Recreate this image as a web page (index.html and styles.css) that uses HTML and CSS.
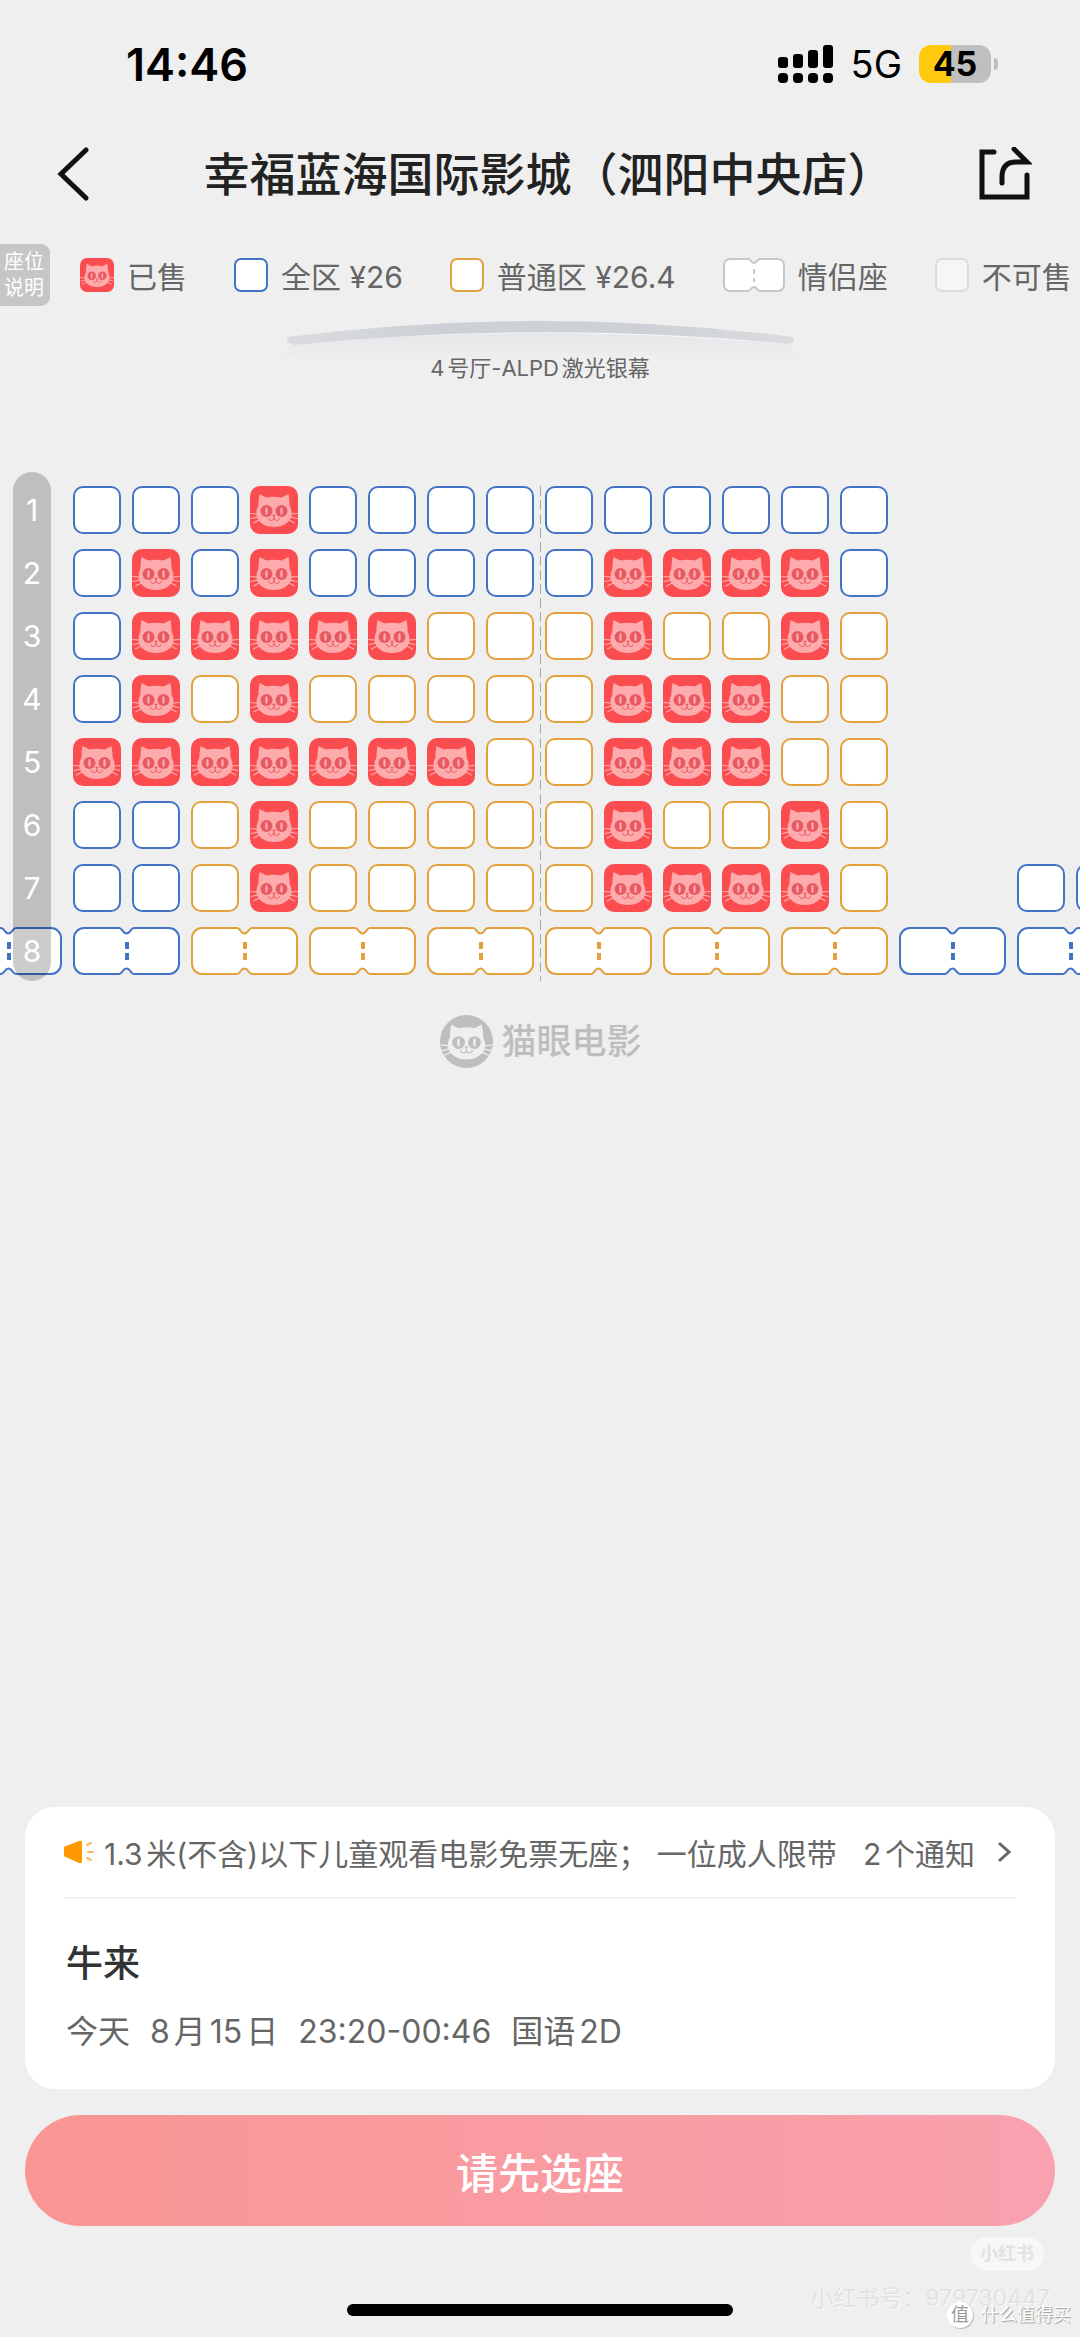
FILE: index.html
```html
<!DOCTYPE html>
<html lang="zh-CN">
<head>
  <meta charset="UTF-8">
  <meta name="viewport" content="width=device-width, initial-scale=1">
  <title>选座</title>
  <link rel="stylesheet" href="styles.css">
</head>
<body>
  <svg class="symbols" aria-hidden="true">
    <symbol id="cat" viewBox="0 0 48 48">
      <path fill="currentColor" d="M9.500 8L16.500 11.500Q24 9.800 31.500 11.500L38.500 8Q39.600 14 39.600 19.500Q42 24 41.500 29C40.500 36.500 33 41 24 41S7.500 36.500 6.500 29Q6 24 8.400 19.500Q8.400 14 9.500 8Z"/>
      <path fill="none" stroke="currentColor" stroke-width="1.200" stroke-linecap="round" d="M.8 27.500L8 28.200M1.200 32.500L8.500 30.800M3.500 37L10 33.500M47.200 27.500L40 28.200M46.800 32.500L39.500 30.800M44.500 37L38 33.500"/>
      <circle class="cat-eye" cx="16.500" cy="25" r="6"/>
      <circle class="cat-eye" cx="31.500" cy="25" r="6"/>
      <ellipse fill="currentColor" cx="16.500" cy="25" rx="1.200" ry="4"/>
      <ellipse fill="currentColor" cx="31.500" cy="25" rx="1.200" ry="4"/>
      <path class="cat-eye" d="M22 28.800h4l-2 2.500z"/>
      <path class="cat-mouth" d="M18.500 32c.3 3.500 5.500 3.500 5.500-.8c0 4.300 5.200 4.300 5.500.8"/>
    </symbol>
    <symbol id="couple" viewBox="0 0 107 48">
      <path fill="#fff" stroke="currentColor" stroke-width="2" d="M11 1H46C49.500 1 49.500 6.500 53.500 6.500S57.500 1 61 1H96A10 10 0 0 1 106 11V37A10 10 0 0 1 96 47H61C57.500 47 57.500 41.500 53.500 41.500S49.500 47 46 47H11A10 10 0 0 1 1 37V11A10 10 0 0 1 11 1Z"/>
      <path fill="currentColor" d="M52 15h4v7h-4zM52 26h4v7h-4z"/>
    </symbol>
  </svg>

  <div class="page">
    <div class="status-bar">
      <span class="time">14:46</span>
      <div class="status-right">
        <svg class="signal" viewBox="0 0 56 38">
          <rect x="0" y="12" width="10" height="11" rx="3"/>
          <rect x="15" y="9" width="10" height="14" rx="3"/>
          <rect x="30" y="5" width="10" height="18" rx="3"/>
          <rect x="45" y="0" width="10" height="23" rx="3"/>
          <rect x="0" y="28" width="10" height="10" rx="4"/>
          <rect x="15" y="28" width="10" height="10" rx="4"/>
          <rect x="30" y="28" width="10" height="10" rx="4"/>
          <rect x="45" y="28" width="10" height="10" rx="4"/>
        </svg>
        <span class="network">5G</span>
        <div class="battery">
          <span class="battery-body">45</span>
          <span class="battery-tip"></span>
        </div>
      </div>
    </div>

    <header class="header">
      <button class="icon-button" type="button" aria-label="返回">
        <svg class="icon-back" viewBox="0 0 32 54">
          <path d="M29 3L4 27L29 51"/>
        </svg>
      </button>
      <h1>幸福蓝海国际影城（泗阳中央店）</h1>
      <button class="icon-button" type="button" aria-label="分享">
        <svg class="icon-share" viewBox="0 0 54 54">
          <path d="M16 5H4V50H49V28"/>
          <path d="M24 36V30C24 20 29 15 38 15H49L36 2"/>
        </svg>
      </button>
    </header>

    <div class="legend">
      <span class="legend-badge">座位<br>说明</span>
      <div class="legend-item"><span class="mark sold"><svg><use href="#cat"/></svg></span>已售</div>
      <div class="legend-item"><span class="mark blue"></span>全区 ¥26</div>
      <div class="legend-item"><span class="mark orange"></span>普通区 ¥26.4</div>
      <div class="legend-item">
        <svg class="mark-couple" viewBox="0 0 62 34">
          <path fill="#fff" stroke="#c6c6c6" stroke-width="2" d="M7 1H25C28 1 28 5 31 5S34 1 37 1H55A6 6 0 0 1 61 7V27A6 6 0 0 1 55 33H37C34 33 34 29 31 29S28 33 25 33H7A6 6 0 0 1 1 27V7A6 6 0 0 1 7 1Z"/>
          <path stroke="#c6c6c6" stroke-width="2" stroke-dasharray="5 4" d="M31 11V24"/>
        </svg>情侣座
      </div>
      <div class="legend-item"><span class="mark disabled"></span>不可售</div>
    </div>

    <div class="screen">
      <svg class="screen-arc" viewBox="0 0 540 44">
        <defs>
          <linearGradient id="glow" x1="0" y1="0" x2="0" y2="1">
            <stop offset="0" stop-color="#e6e7ea"/>
            <stop offset="1" stop-color="#efefef"/>
          </linearGradient>
          <linearGradient id="arc">
            <stop offset="0" stop-color="#dadcdf"/>
            <stop offset=".3" stop-color="#cdd0d5"/>
            <stop offset=".7" stop-color="#cdd0d5"/>
            <stop offset="1" stop-color="#dadcdf"/>
          </linearGradient>
        </defs>
        <path fill="url(#glow)" d="M20 27Q270 3 520 27L530 40Q270 48 10 40Z"/>
        <path fill="none" stroke="#f8f9fb" stroke-width="2" d="M60 22Q270 6 480 22"/>
        <path fill="url(#arc)" d="M17 19Q270 -13 523 19Q527 22 520 26Q270 2 24 27Q16 25 17 19Z"/>
      </svg>
      <p>4号厅-ALPD激光银幕</p>
    </div>

    <main class="hall">
      <div class="seats" id="seats"></div>
      <div class="center-line"></div>
      <div class="row-numbers" id="row-numbers"></div>
    </main>

    <div class="brand">
      <span class="brand-logo"><svg><use href="#cat"/></svg></span>
      <span>猫眼电影</span>
    </div>

    <footer class="bottom">
      <section class="card">
        <div class="notice">
          <svg class="icon-horn" viewBox="0 0 30 24">
            <path fill="#ff9800" d="M2 6Q0 6 0 8V15Q0 17 2 17L15 23Q18 24 18 21V2Q18 0 15 1Z"/>
            <path fill="none" stroke="#ffb74d" stroke-width="2" stroke-linecap="round" d="M23 5L27 3M24 12H29M23 18L27 20"/>
          </svg>
          <span class="notice-text">1.3米(不含)以下儿童观看电影免票无座； 一位成人限带</span>
          <a class="notice-more" href="#">2个通知
            <svg class="icon-arrow" viewBox="0 0 14 22"><path d="M2 2L12 11L2 20"/></svg>
          </a>
        </div>
        <h2>牛来</h2>
        <p class="session">
          <span>今天</span>
          <span>8月15日</span>
          <span>23:20-00:46</span>
          <span>国语2D</span>
        </p>
      </section>
      <button class="submit" type="button">请先选座</button>
      <div class="home-indicator"></div>
    </footer>

    <div class="watermark">
      <span class="watermark-pill">小红书</span>
      <span class="watermark-id">小红书号：979730447</span>
    </div>
    <div class="smzdm"><span class="smzdm-logo">值</span>什么值得买</div>
  </div>

  <script src="seats.js"></script>
</body>
</html>
```
FILE: styles.css
```css
* {
  box-sizing: border-box;
}

body {
  margin: 0;
  background-color: #efefef;
  color: #666;
  font-family: Inter, "Noto Sans CJK SC", sans-serif;
  text-autospace: normal;
}

h1, h2, p {
  margin: 0;
}

button {
  padding: 0;
  border: none;
  background: none;
  font-family: inherit;
  cursor: pointer;
}

svg {
  display: block;
}

.symbols {
  position: absolute;
  width: 0;
  height: 0;
}

.page {
  position: relative;
  display: flex;
  flex-direction: column;
  min-height: 100vh;
  overflow: hidden;
}

/* status bar */
.status-bar {
  display: flex;
  justify-content: space-between;
  align-items: center;
  height: 128px;
  padding: 0 82px 0 126px;
  color: #000;
}

.time {
  font-size: 45px;
  font-weight: 600;
}

.status-right {
  display: flex;
  align-items: center;
}

.signal {
  width: 56px;
  height: 38px;
}

.network {
  margin: 0 17px;
  font-size: 38px;
}

.battery {
  display: flex;
  align-items: center;
  gap: 3px;
}

.battery-body {
  width: 72px;
  border-radius: 12px;
  background: linear-gradient(to right, #ffc90d 45%, #bfbfbf 45%);
  font-size: 34px;
  font-weight: 700;
  line-height: 38px;
  text-align: center;
}

.battery-tip {
  width: 4px;
  height: 12px;
  border-radius: 0 6px 6px 0;
  background-color: #bfbfbf;
}

/* header */
.header {
  display: flex;
  justify-content: space-between;
  align-items: center;
  height: 92px;
  padding: 0 48px 0 57px;
}

.header h1 {
  padding-left: 30px;
  color: #222;
  font-size: 46px;
  font-weight: 500;
  line-height: 60px;
}

.icon-back {
  width: 32px;
  height: 54px;
}

.icon-share {
  width: 54px;
  height: 54px;
}

.icon-back path,
.icon-share path {
  fill: none;
  stroke: #111;
  stroke-width: 5;
  stroke-linecap: round;
}

/* legend */
.legend {
  display: flex;
  align-items: center;
  gap: 47px;
  height: 110px;
  white-space: nowrap;
}

.legend-badge {
  width: 50px;
  margin-right: -17px;
  padding: 5px 4px;
  border-radius: 0 9px 9px 0;
  background-color: #c6c6c6;
  color: #fff;
  font-size: 20px;
  line-height: 26px;
}

.legend-item {
  display: flex;
  align-items: center;
  gap: 13px;
  font-size: 30px;
}

.mark {
  width: 34px;
  height: 34px;
  border: 2px solid;
  border-radius: 7px;
  background-color: #fff;
}

.mark-couple {
  width: 62px;
  height: 34px;
}

.blue {
  color: #4273c5;
}

.orange {
  color: #e2a13b;
}

.mark.disabled {
  border-color: #dcdcdc;
  background-color: #f6f6f6;
}

.sold {
  border: none;
  background-color: #fb4d50;
  color: #feabae;
}

.sold svg {
  width: 100%;
  height: 100%;
}

.cat-eye {
  fill: var(--eye, #e75a61);
}

.cat-mouth {
  fill: none;
  stroke: var(--eye, #e75a61);
  stroke-width: 1;
}

/* screen */
.screen {
  display: flex;
  flex-direction: column;
  align-items: center;
  margin-top: -12px;
}

.screen-arc {
  width: 540px;
  height: 44px;
}

.screen p {
  margin-top: -9px;
  font-size: 22px;
  line-height: 30px;
}

/* seats */
.hall {
  position: relative;
  margin-top: 89px;
  padding: 14px 0 6px;
  overflow: hidden;
}

.seats {
  display: flex;
  flex-direction: column;
  gap: 15px;
  margin-left: -45px;
}

.seat-row {
  display: grid;
  grid-template-columns: repeat(20, 48px);
  gap: 11px;
}

.seat {
  height: 48px;
  border: 2px solid;
  border-radius: 10px;
  background-color: #fff;
}

.seat.sold {
  border: none;
  background-color: #fb4d50;
  color: #feabae;
}

.seat.couple {
  grid-column: span 2;
  border: none;
  background: none;
}

.seat.couple svg {
  width: 100%;
  height: 48px;
}

.center-line {
  position: absolute;
  top: 14px;
  bottom: 0;
  left: 50%;
  width: 1px;
  background: repeating-linear-gradient(to bottom, #aaa 0, #aaa 10px, transparent 10px, transparent 14px);
}

.row-numbers {
  position: absolute;
  top: 0;
  bottom: 0;
  left: 13px;
  display: flex;
  flex-direction: column;
  gap: 15px;
  width: 38px;
  padding-top: 14px;
  border-radius: 19px;
  background-color: rgba(0, 0, 0, 0.2);
  color: #fff;
  font-size: 30px;
  line-height: 48px;
  text-align: center;
}

.brand {
  display: flex;
  justify-content: center;
  align-items: center;
  gap: 8px;
  margin-top: 34px;
  padding-left: 2px;
  color: #bebebe;
  font-size: 35px;
  font-weight: 500;
  line-height: 53px;
}

.brand-logo {
  --eye: #bebebe;
  width: 53px;
  height: 53px;
  padding: 1px;
  border-radius: 50%;
  background-color: #bebebe;
  color: #efefef;
}

.brand-logo svg {
  width: 51px;
  height: 51px;
}

/* bottom */
.bottom {
  margin-top: auto;
  padding: 0 25px 21px;
}

.card {
  padding: 0 39px 36px;
  border-radius: 30px;
  background-color: #fff;
}

.notice {
  display: flex;
  align-items: center;
  height: 92px;
  border-bottom: 2px solid #f0f0f0;
  font-size: 30px;
  white-space: nowrap;
}

.icon-horn {
  flex: none;
  width: 30px;
  height: 24px;
}

.notice-text {
  flex: 1;
  margin: 0 12px 0 10px;
  overflow: hidden;
}

.notice-more {
  display: flex;
  align-items: center;
  gap: 22px;
  padding-right: 5px;
  color: inherit;
  text-decoration: none;
}

.icon-arrow {
  width: 14px;
  height: 22px;
}

.icon-arrow path {
  fill: none;
  stroke: #666;
  stroke-width: 3;
}

.card h2 {
  margin-top: 40px;
  padding-left: 2px;
  color: #333;
  font-size: 37px;
  font-weight: 500;
  line-height: 50px;
}

.session {
  display: flex;
  gap: 20px;
  margin-top: 22px;
  padding-left: 2px;
  font-size: 32px;
  line-height: 42px;
}

.submit {
  display: block;
  width: 100%;
  height: 111px;
  margin-top: 26px;
  border-radius: 56px;
  background: linear-gradient(to right, #f99694, #f9a1af);
  color: #fff;
  font-size: 42px;
  font-weight: 500;
}

.home-indicator {
  width: 386px;
  height: 12px;
  margin: 78px auto 0;
  border-radius: 6px;
  background-color: #000;
}

/* watermarks */
.watermark {
  position: absolute;
  right: 30px;
  bottom: 22px;
  display: flex;
  flex-direction: column;
  align-items: flex-end;
  gap: 10px;
  color: #e2e2e2;
}

.watermark-pill {
  margin-right: 6px;
  padding: 0 10px;
  border-radius: 17px;
  background-color: #f7f7f7;
  font-size: 18px;
  font-weight: 700;
  line-height: 34px;
}

.watermark-id {
  font-size: 23px;
  line-height: 34px;
  text-shadow: 1px 1px 1px #fafafa;
}

.smzdm {
  position: absolute;
  right: 9px;
  bottom: 8px;
  display: flex;
  align-items: center;
  gap: 8px;
  color: #fff;
  font-size: 18px;
  line-height: 28px;
  text-shadow: 1px 1px 1px #999;
}

.smzdm-logo {
  width: 26px;
  border-radius: 50%;
  background-color: #fff;
  box-shadow: 1px 1px 1px #bbb;
  color: #999;
  line-height: 26px;
  text-align: center;
  text-shadow: none;
}
```
FILE: seats.js
```js
// b - 全区, o - 普通区, x - 已售, B / O - 情侣座 (两列)
const rows = [
  '  bbbxbbbbbbbbbb    ',
  '  bxbxbbbbbxxxxb    ',
  '  bxxxxxoooxooxo    ',
  '  bxoxoooooxxxoo    ',
  '  xxxxxxxooxxxoo    ',
  '  bboxoooooxooxo    ',
  '  bboxoooooxxxxo  bb',
  'BBOOOOOOBB'
];

const seats = document.getElementById('seats');
const rowNumbers = document.getElementById('row-numbers');

function createSeat(type) {
  if (type === ' ') {
    return document.createElement('span');
  }

  const seat = document.createElement('button');
  seat.type = 'button';
  seat.className = 'seat';

  if (type === 'x') {
    seat.classList.add('sold');
    seat.disabled = true;
    seat.innerHTML = '<svg><use href="#cat"/></svg>';
  } else {
    seat.classList.add(type.toLowerCase() === 'b' ? 'blue' : 'orange');
  }

  if (type === 'B' || type === 'O') {
    seat.classList.add('couple');
    seat.innerHTML = '<svg><use href="#couple"/></svg>';
  }
  return seat;
}

rows.forEach((row, i) => {
  const seatRow = document.createElement('div');
  seatRow.className = 'seat-row';
  row.split('').forEach(type => seatRow.appendChild(createSeat(type)));
  seats.appendChild(seatRow);

  const number = document.createElement('span');
  number.textContent = i + 1;
  rowNumbers.appendChild(number);
});
```
